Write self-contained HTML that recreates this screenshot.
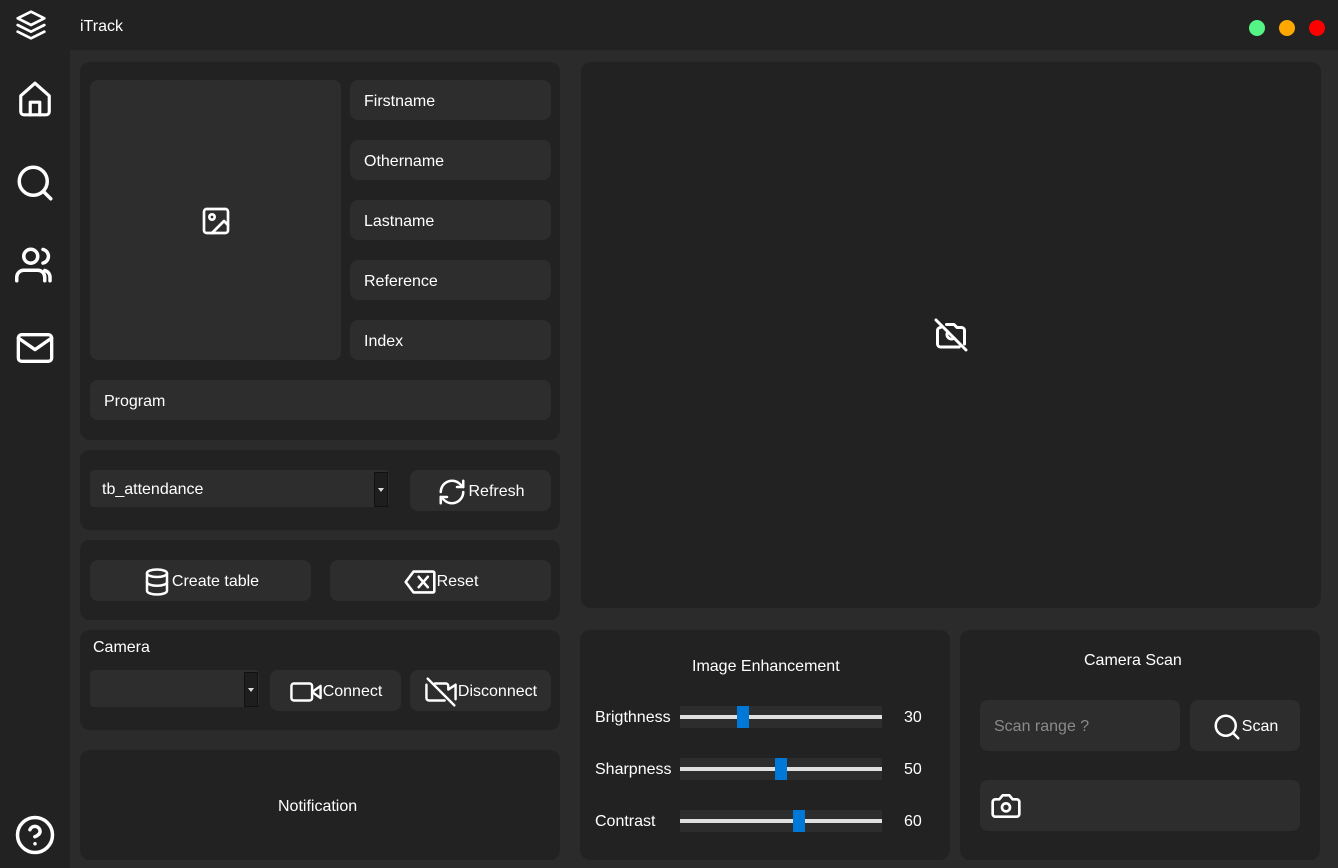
<!DOCTYPE html>
<html><head><style>
*{box-sizing:border-box;margin:0;padding:0}
body{width:1338px;height:868px;background:#222;font-family:"Liberation Sans",sans-serif;color:#fff;position:relative;overflow:hidden;font-size:16px}
.a{position:absolute}
.content{left:70px;top:50px;width:1268px;height:818px;background:#2b2b2b}
.p{position:absolute;background:#222;border-radius:10px}
.f{position:absolute;background:#2d2d2d;border-radius:8px;display:flex;align-items:center;padding-left:14px;padding-top:3px;font-size:16px}
.b{position:absolute;background:#2d2d2d;border-radius:8px;display:flex;align-items:center;justify-content:center;font-size:16px;padding-top:2px}
.dot{position:absolute;width:16px;height:16px;border-radius:50%;top:20px}
svg{fill:none;stroke:#fff;stroke-width:2;stroke-linecap:round;stroke-linejoin:round}
.trk{position:absolute;left:680px;width:202px;height:22px;background:#2d2d2d}
.trk:before{content:"";position:absolute;left:0;right:0;top:9px;height:4px;background:#e0e0e0}
.th{position:absolute;top:0;width:12px;height:22px;background:#0078d7}
.lab{position:absolute;left:595px;font-size:16px}
.val{position:absolute;left:904px;font-size:16px}
.dd{position:absolute;width:14px;background:#1e1e1e;border:1px solid #111}
.dd:after{content:"";position:absolute;left:3px;top:50%;margin-top:-2px;border-left:3px solid transparent;border-right:3px solid transparent;border-top:4px solid #ddd}
</style></head><body>
<svg class="a" style="left:15px;top:9px" width="32" height="32" viewBox="0 0 24 24"><path d="M12 2L2 7l10 5 10-5z"/><path d="M2 12l10 5 10-5"/><path d="M2 17l10 5 10-5"/></svg>
<div class="a" style="left:80px;top:18px;font-size:16px">iTrack</div>
<div class="dot" style="left:1249px;background:#55f585"></div>
<div class="dot" style="left:1279px;background:#ffa800"></div>
<div class="dot" style="left:1309px;background:#ff0000"></div>
<svg class="a" style="left:16px;top:80px" width="38" height="38" viewBox="0 0 24 24"><path d="M3 10l9-8 9 8v10a2 2 0 0 1-2 2H5a2 2 0 0 1-2-2z"/><path d="M9 22V14h6v8"/></svg>
<svg class="a" style="left:14px;top:162px" width="42" height="42" viewBox="0 0 24 24"><circle cx="11" cy="11" r="8"/><path d="M21 21l-4.3-4.3"/></svg>
<svg class="a" style="left:13px;top:244px" width="46" height="42" viewBox="0 0 26 24"><circle cx="10" cy="7" r="4"/><path d="M2 21v-2a4 4 0 0 1 4-4h8a4 4 0 0 1 4 4v2"/><path d="M17 3.1a4 4 0 0 1 0 7.8"/><path d="M21 21v-2a4 4 0 0 0-3-3.9"/></svg>
<svg class="a" style="left:15px;top:328px" width="40" height="40" viewBox="0 0 24 22"><rect x="2" y="3" width="20" height="16" rx="2"/><path d="M2 5l10 7 10-7"/></svg>
<svg class="a" style="left:14px;top:814px" width="42" height="42" viewBox="0 0 24 24"><circle cx="12" cy="12" r="10"/><path d="M9.1 9a3 3 0 0 1 5.8 1c0 2-3 3-3 3"/><path d="M12 17h.01"/></svg>
<div class="a content"></div>

<div class="p" style="left:80px;top:62px;width:480px;height:378px"></div>
<div class="b" style="left:90px;top:80px;width:251px;height:280px"><svg width="32" height="32" viewBox="0 0 24 24"><rect x="3" y="3" width="18" height="18" rx="2"/><circle cx="9" cy="9" r="2"/><path d="M21 15l-3-3-9 9"/></svg></div>
<div class="f" style="left:350px;top:80px;width:201px;height:40px">Firstname</div>
<div class="f" style="left:350px;top:140px;width:201px;height:40px">Othername</div>
<div class="f" style="left:350px;top:200px;width:201px;height:40px">Lastname</div>
<div class="f" style="left:350px;top:260px;width:201px;height:40px">Reference</div>
<div class="f" style="left:350px;top:320px;width:201px;height:40px">Index</div>
<div class="f" style="left:90px;top:380px;width:461px;height:40px">Program</div>

<div class="p" style="left:80px;top:450px;width:480px;height:80px"></div>
<div class="f" style="left:90px;top:470px;width:299px;height:37px;border-radius:4px;padding-left:12px">tb_attendance</div>
<div class="dd" style="left:374px;top:472px;height:35px"></div>
<div class="b" style="left:410px;top:470px;width:141px;height:41px"><svg width="32" height="30" viewBox="0 0 24 24"><path d="M3 12a9 9 0 0 1 15-6.7L21 8"/><path d="M21 3v5h-5"/><path d="M21 12a9 9 0 0 1-15 6.7L3 16"/><path d="M8 16H3v5"/></svg>Refresh</div>

<div class="p" style="left:80px;top:540px;width:480px;height:80px"></div>
<div class="b" style="left:90px;top:560px;width:221px;height:41px"><svg width="30" height="30" viewBox="0 0 24 24"><ellipse cx="12" cy="5" rx="8" ry="3"/><path d="M4 5v14c0 1.7 3.6 3 8 3s8-1.3 8-3V5"/><path d="M4 12c0 1.7 3.6 3 8 3s8-1.3 8-3"/></svg>Create table</div>
<div class="b" style="left:330px;top:560px;width:221px;height:41px"><svg width="34" height="26" viewBox="0 0 26 20"><path d="M8 2h15a1 1 0 0 1 1 1v14a1 1 0 0 1-1 1H8L2 10z"/><path d="M12 6l7 8M19 6l-7 8"/></svg>Reset</div>

<div class="p" style="left:80px;top:630px;width:480px;height:100px"></div>
<div class="a" style="left:93px;top:639px">Camera</div>
<div class="f" style="left:90px;top:670px;width:169px;height:37px;border-radius:4px"></div>
<div class="dd" style="left:244px;top:672px;height:35px"></div>
<div class="b" style="left:270px;top:670px;width:131px;height:41px"><svg width="34" height="26" viewBox="0 0 28 20"><rect x="2" y="3" width="17" height="14" rx="2"/><path d="M19 10l7-5v10z"/></svg>Connect</div>
<div class="b" style="left:410px;top:670px;width:141px;height:41px"><svg width="34" height="34" viewBox="0 0 28 28"><path d="M3 3l22 22"/><path d="M9 7h9a2 2 0 0 1 2 2v3l6-4v12"/><path d="M17 21H4a2 2 0 0 1-2-2V8"/></svg>Disconnect</div>

<div class="p" style="left:80px;top:750px;width:480px;height:110px"></div>
<div class="a" style="left:278px;top:798px">Notification</div>

<div class="p" style="left:581px;top:62px;width:740px;height:546px"></div>
<svg class="a" style="left:933px;top:317px" width="36" height="36" viewBox="0 0 24 24"><path d="M2 2l20 20"/><path d="M9 5h5l2 2h3a2 2 0 0 1 2 2v9"/><path d="M17.5 20H5a2 2 0 0 1-2-2V9a2 2 0 0 1 2-2"/><path d="M14.1 14.1A3 3 0 0 1 9.9 9.9"/></svg>

<div class="p" style="left:580px;top:630px;width:370px;height:230px"></div>
<div class="a" style="left:692px;top:658px">Image Enhancement</div>
<div class="lab" style="top:709px">Brigthness</div>
<div class="trk" style="top:706px"><div class="th" style="left:57px"></div></div>
<div class="val" style="top:709px">30</div>
<div class="lab" style="top:761px">Sharpness</div>
<div class="trk" style="top:758px"><div class="th" style="left:95px"></div></div>
<div class="val" style="top:761px">50</div>
<div class="lab" style="top:813px">Contrast</div>
<div class="trk" style="top:810px"><div class="th" style="left:113px"></div></div>
<div class="val" style="top:813px">60</div>

<div class="p" style="left:960px;top:630px;width:360px;height:230px"></div>
<div class="a" style="left:1084px;top:652px">Camera Scan</div>
<div class="f" style="left:980px;top:700px;width:200px;height:51px;color:#8a8a8a">Scan range ?</div>
<div class="b" style="left:1190px;top:700px;width:110px;height:51px"><svg width="30" height="30" viewBox="0 0 24 24"><circle cx="11" cy="11" r="8"/><path d="M21 21l-4.3-4.3"/></svg>Scan</div>
<div class="f" style="left:980px;top:780px;width:320px;height:51px;padding-left:9px;padding-top:0"><svg width="34" height="32" viewBox="0 0 24 24"><path d="M14.5 4h-5L7 7H4a2 2 0 0 0-2 2v9a2 2 0 0 0 2 2h16a2 2 0 0 0 2-2V9a2 2 0 0 0-2-2h-3z"/><circle cx="12" cy="13" r="3"/></svg></div>
</body></html>
